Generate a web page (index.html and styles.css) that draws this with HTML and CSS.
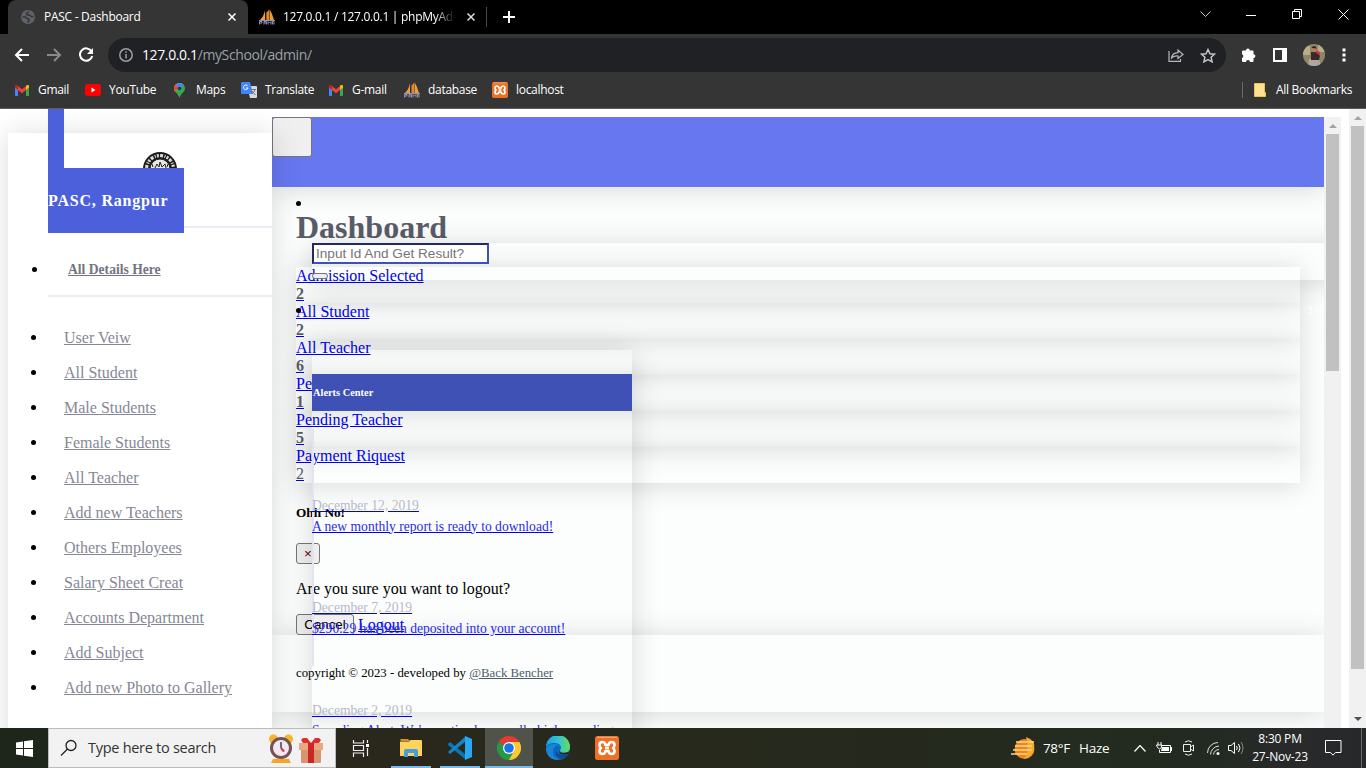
FILE: index.html
```html
<!DOCTYPE html>
<html lang="en">
<head>
<meta charset="utf-8">
<title>PASC - Dashboard</title>
<link rel="stylesheet" href="styles.css">
</head>
<body>
<svg class="defs" aria-hidden="true">
  <symbol id="gmail" viewBox="0 0 14 11"><path fill="#4285f4" d="M0 1v9.200q0 .8.8.8H3V4z"/><path fill="#34a853" d="M11 4v7h2.200q.8 0 .8-.8V1z"/><path fill="#ea4335" d="M1.500 0 7 4.300 12.500 0v4L7 8.300 1.500 4z"/><path fill="#c5221f" d="M0 1.500C0 0 1.500-.4 3 .8v4L0 2.800z"/><path fill="#fbbc04" d="M14 1.500C14 0 12.500-.4 11 .8v4l3-2z"/></symbol>
  <symbol id="sail" viewBox="0 0 16 16"><path fill="#f39a35" d="M6 1v10H1Q5 7 6 1zM10.500 0q3 5 4.500 11h-4.500z"/><path fill="#d98a35" d="M7 11V4l3-3v10z"/><path d="M7 11V4" stroke="#333"/><path d="M.5 15.500v-3H3v1.500H1m4 1.500v-3h2.500v3M5 14h2.500m1.500 1.500v-3l1.500 1.500 1.500-1.500v3m1.500 0v-3H15v3M0 11.500h16" fill="none" stroke="#8f90b5"/></symbol>
  <symbol id="xampp" viewBox="0 0 24 24"><rect width="24" height="24" rx="2.500" fill="#ee7024"/><path d="M2 1.300h20" stroke="#f6b48a"/><path d="M7.500 6Q4.500 6 4.500 9q0 2 1.500 3-1.500 1-1.500 3 0 3 3 3Q10 18 10.500 15h3q.5 3 3 3 3 0 3-3 0-2-1.500-3 1.500-1 1.500-3 0-3-3-3-2.500 0-3 3h-3Q10 6 7.500 6zM10 12h4" fill="none" stroke="#fff" stroke-width="2.600" stroke-linejoin="round"/></symbol>
</svg>
<header class="tabs">
  <div class="tab active">
    <svg width="14" height="14" viewBox="0 0 14 14"><circle cx="7" cy="7" r="7" fill="#5f6368"/><path d="M1.500 7h3l1.500 1.500 2 .5v1.500L6.500 12.500M8 1.500 5.500 3.500 6 5h2.500L10 6.500h2.500" fill="none" stroke="#35363a" stroke-width="1.500"/></svg>
    <span class="tab-title">PASC - Dashboard</span>
    <svg class="x" width="8" height="8" viewBox="0 0 8 8"><path d="m.5.5 7 7m0-7-7 7" stroke="#fff" stroke-width="1.500"/></svg>
  </div>
  <div class="tab second">
    <svg width="17" height="16"><use href="#sail" width="16" height="16"/></svg>
    <span class="tab-title fade">127.0.0.1 / 127.0.0.1 | phpMyAdmin</span>
    <svg class="x" width="8" height="8" viewBox="0 0 8 8"><path d="m.5.5 7 7m0-7-7 7" stroke="#ddd" stroke-width="1.500"/></svg>
  </div>
  <span class="tab-sep"></span>
  <svg class="plus" width="12" height="12"><path d="M6 0v12M0 6h12" stroke="#fff" stroke-width="2"/></svg>
  <div class="winctl">
    <svg width="11" height="7"><path d="m.5.5 5 5 5-5" fill="none" stroke="#ccc"/></svg>
    <svg width="11" height="11"><path d="M0 6.500h10" stroke="#fff"/></svg>
    <svg width="11" height="11"><path d="M.5 2.500h7v7h-7zM2.500 2V.5h7v7H8" fill="none" stroke="#fff"/></svg>
    <svg width="11" height="11"><path d="m.5.5 10 10m0-10-10 10" stroke="#fff"/></svg>
  </div>
</header>
<div class="toolbar">
  <svg class="nav-ico" width="16" height="14" viewBox="0 0 16 14"><path d="M15 7H2m6-6L2 7l6 6" fill="none" stroke="#fff" stroke-width="2"/></svg>
  <svg class="nav-ico" width="16" height="14" viewBox="0 0 16 14"><path d="M1 7h13M8 1l6 6-6 6" fill="none" stroke="#8a8a8a" stroke-width="2"/></svg>
  <svg class="nav-ico" width="16" height="16" viewBox="0 0 16 16"><path d="M13.600 4.600A6.200 6.200 0 1 0 14.200 9" fill="none" stroke="#fff" stroke-width="2"/><path d="M15 1v6H9z" fill="#fff"/></svg>
  <div class="omnibox">
    <svg width="14" height="14"><circle cx="7" cy="7" r="6.200" fill="none" stroke="#9aa0a6" stroke-width="1.500"/><path d="M7 6v4.500M7 3.300v1.500" stroke="#9aa0a6" stroke-width="1.500"/></svg>
    <span class="url"><b>127.0.0.1</b>/mySchool/admin/</span>
    <svg class="share" width="16" height="14" viewBox="0 0 16 14"><path d="M1 3v10.300h11.500V11M3.500 10q.5-5 6.500-5.300V2l5 4.500-5 4V8Q6 7.500 3.500 10z" fill="none" stroke="#b5b7ba" stroke-width="1.200"/></svg>
    <svg width="16" height="15" viewBox="0 0 16 15"><path d="m8 1.500 2 4.200 4.500.5-3.400 3.100 1 4.500L8 11.500l-4.100 2.300 1-4.500L1.500 6.200l4.500-.5z" fill="none" stroke="#c3c5c8" stroke-width="1.500"/></svg>
  </div>
  <div class="tools">
    <svg width="15" height="15" viewBox="0 0 15 15"><path d="M1 3.500q0-1 1-1h3a1.900 1.900 0 0 1 3.800 0h2.700q1 0 1 1v2.700a1.900 1.900 0 0 1 0 3.800v3q0 1-1 1H9a2 2 0 0 0-4 0H2q-1 0-1-1v-3a2 2 0 0 0 0-3.800z" fill="#fff"/></svg>
    <svg width="14" height="14"><path d="M1 1h12v12H1z" fill="none" stroke="#fff" stroke-width="2"/><path d="M9 0h5v14H9z" fill="#fff"/></svg>
    <svg width="22" height="22" viewBox="0 0 22 22"><defs><clipPath id="face"><circle cx="11" cy="11" r="11"/></clipPath></defs><g clip-path="url(#face)"><path fill="#8d8863" d="M0 0h22v22H0z"/><path fill="#b8ad89" d="M0 2h7v9H0zM15 1h7v7h-7z"/><path fill="#b3a4a0" d="M6 15h10l2 7H5z"/><path fill="#382a2c" d="M8 8h6l3 4-1 4H8z"/><path fill="#d8343c" d="m13 6 4 2v3l-4-2z"/><circle cx="11" cy="5.500" r="2.700" fill="#b67e66"/><path d="M8.500 4Q11 0 14 4.500" fill="#2c2426"/></g></svg>
    <svg width="4" height="14"><path d="M.5.5h3v3h-3zm0 5h3v3h-3zm0 5h3v3h-3z" fill="#fff"/></svg>
  </div>
</div>
<nav class="bookmarks">
  <span class="bm b1"><svg width="14" height="11"><use href="#gmail"/></svg>Gmail</span>
  <span class="bm b2"><svg width="16" height="12"><rect width="16" height="12" rx="3" fill="#f00"/><path d="m6.500 3.500 4 2.500-4 2.500z" fill="#fff"/></svg>YouTube</span>
  <span class="bm b3"><svg width="11" height="15" viewBox="0 0 11 15"><path d="M5.500 0A5.500 5.500 0 0 0 0 5.500C0 9 4 10 5.500 15 7 10 11 9 11 5.500A5.500 5.500 0 0 0 5.500 0z" fill="#34a853"/><path d="M1 8.500 9.500 2Q8 0 5.500 0A5.500 5.500 0 0 0 0 5.500Q0 7 1 8.500z" fill="#fbbc04"/><path d="M0 5.500Q0 3.500 1.300 2L5 5 1 8.500Q0 7 0 5.500z" fill="#ea4335"/><path d="M1.300 2Q3 0 5.500 0 8 0 9.700 2L5.500 6z" fill="#4285f4"/><circle cx="5.500" cy="5.500" r="1.800" fill="#35363a"/></svg>Maps</span>
  <span class="bm b4"><svg width="16" height="16"><path d="M6 4h9q1 0 1 1v10q0 1-1 1H9z" fill="#d5d8dc"/><path d="M1 0h8l3 12H1q-1 0-1-1V1q0-1 1-1z" fill="#4285f4"/><path d="M6.800 4.200A2.300 2.300 0 1 0 7 6H5" fill="none" stroke="#fff"/><path d="M10.500 7.500H15m-1 0q-1 3-3 4.500m0-3 3.500 4" fill="none" stroke="#777"/></svg>Translate</span>
  <span class="bm b5"><svg width="14" height="11"><use href="#gmail"/></svg>G-mail</span>
  <span class="bm b6"><svg width="16" height="16"><use href="#sail"/></svg>database</span>
  <span class="bm b7"><svg width="16" height="16"><use href="#xampp"/></svg>localhost</span>
  <span class="bm all"><svg width="12" height="14"><path d="M.5.5h10v9h1v4H.5z" fill="#fde293" stroke="#e9c54a"/></svg>All Bookmarks</span>
</nav>

<main class="viewport">
  <aside class="sidebar">
    <div class="brand-area">
      <svg class="seal" width="36" height="36" viewBox="0 0 36 36"><circle cx="18" cy="18" r="17" fill="#1e1c19"/><circle cx="18" cy="18" r="13.500" fill="none" stroke="#ddd" stroke-width="3.200" stroke-dasharray="2 1.300 3 1.500 1 1.200"/><circle cx="18" cy="18" r="10" fill="#e8e8e6" stroke="#222"/><path d="m13 17 2-4 2 3 1-5 2 5 3-3 1 4M11 16l-1-3m15 3 1-3" stroke="#222" fill="none"/></svg>
      <div class="brand-stem"></div>
      <div class="brand">PASC, Rangpur</div>
      <div class="rule rule-a"></div>
    </div>
    <ul class="menu">
      <li class="first"><a>All Details Here</a></li>
      <li class="rule"></li>
      <li><a>User Veiw</a></li><li><a>All Student</a></li><li><a>Male Students</a></li><li><a>Female Students</a></li><li><a>All Teacher</a></li><li><a>Add new Teachers</a></li><li><a>Others Employees</a></li><li><a>Salary Sheet Creat</a></li><li><a>Accounts Department</a></li><li><a>Add Subject</a></li><li><a>Add new Photo to Gallery</a></li>
    </ul>
  </aside>
  <section class="content">
    <div class="topbar"><button class="toggle" aria-label="Menu"></button></div>
    <div class="page">
      <h1>Dashboard</h1>
      <div class="cards">
        <a class="card">Admission Selected<b>2</b></a>
        <a class="card">All Student<b>2</b></a>
        <a class="card">All Teacher<b>6</b></a>
        <a class="card">Pending Student<b>1</b></a>
        <a class="card">Pending Teacher<b>5</b></a>
        <a class="card">Payment Riquest<b class="thin">2</b></a>
      </div>
      <h5>Ohh No!</h5>
      <button class="close">×</button>
      <p>Are you sure you want to logout?</p>
      <div class="actions"><button class="cancel">Cancel</button><a>Logout</a></div>
    </div>
    <footer>copyright © 2023 - developed by <a>@Back Bencher</a></footer>
    <div class="after"></div>
    <i class="dot d1"></i><i class="dot d2"></i>
    <div class="search"><input placeholder="Input Id And Get Result?" aria-label="Search"><button aria-label="Go"></button></div>
    <span class="badge">3+</span>
    <div class="alerts">
      <h6>Alerts Center</h6>
      <div class="items">
        <a><span>December 12, 2019</span>A new monthly report is ready to download!</a>
        <a><span>December 7, 2019</span>$290.29 has been deposited into your account!</a>
        <a><span>December 2, 2019</span>Spending Alert: We've noticed unusually high spending</a>
      </div>
    </div>
  </section>
  <div class="scroll inner"><i class="up"></i><i class="thumb"></i></div>
  <div class="scroll outer"><i class="up"></i><i class="thumb"></i><i class="down"></i></div>
</main>

<footer class="taskbar">
  <div class="start"><svg width="17" height="17" viewBox="0 0 17 17"><path d="m0 2.500 7-1V8H0zM8 1.300 17 0v8H8zM0 9h7v6.500l-7-1zm8 0h9v8l-9-1.300z" fill="#fff"/></svg></div>
  <div class="find">
    <svg width="18" height="18"><circle cx="11" cy="6.500" r="5" fill="none" stroke="#222" stroke-width="1.300"/><path d="M7.500 10 1 16.500" stroke="#222" stroke-width="1.300"/></svg>
    <span>Type here to search</span>
    <svg class="clock" width="24" height="29" viewBox="0 0 24 29"><path d="m4 25 16 0 2 4H2z" fill="#f5a623"/><circle cx="4.500" cy="5" r="4.500" fill="#f7b52c"/><circle cx="19.500" cy="5" r="4.500" fill="#f7b52c"/><circle cx="12" cy="14" r="9.500" fill="#eee9f5" stroke="#755154" stroke-width="3"/><path d="M12 8v6" stroke="#473b56" stroke-width="1.500"/><path d="m12 14 3 3.500" stroke="#e22c46" stroke-width="2"/></svg>
    <svg class="gift" width="24" height="26" viewBox="0 0 24 26"><path d="M2 12h20v13q0 1-1 1H3q-1 0-1-1z" fill="#d99470"/><path d="M0 6h24v7H0z" fill="#e8a883"/><path d="M9 6h6v20H9z" fill="#c92725"/><path d="M12 6 8 1H4L2 3l2 3zm0 0 4-5h4l2 2-2 3z" fill="#d93030"/></svg>
  </div>
  <div class="app a0"><svg width="17" height="17"><path d="M1.500 0v3h10V0M1.500 17v-4h10v4M1.500 5.500h10v5h-10zM15.500 0v3m0 5v8" fill="none" stroke="#eee" stroke-width="1.200"/><path d="M14 4h3v3h-3z" fill="#fff"/></svg></div>
  <div class="app line"><svg width="22" height="18" viewBox="0 0 22 18"><path d="M0 0h8l2 2H1z" fill="#d9930d"/><path d="M0 2.500h9L10.500 1H21q1 0 1 1v15H0z" fill="#ffd35d"/><path d="M4 18v-6q0-2 2-2h10q2 0 2 2v6h-4v-4H8v4z" fill="#43a0dc"/></svg></div>
  <div class="app line"><svg width="24" height="24" viewBox="0 0 24 24"><path d="m0 8 2-2 16 13v5L0 9z" fill="#0877b9"/><path d="M0 16 18 0v5L2 18z" fill="#1187c9"/><path d="m17 0 7 3v18l-7 3z" fill="#29a8f2"/></svg></div>
  <div class="app line on"><svg width="24" height="24" viewBox="0 0 24 24"><path d="M12 12 1.600 6A12 12 0 0 1 22.400 6z" fill="#e33b2e"/><path d="M12 12 22.400 6A12 12 0 0 1 12 24z" fill="#fcc934"/><path d="M12 24A12 12 0 0 1 1.600 6L12 12l5 3z" fill="#279847"/><path d="M12 6h10.400L17 15z" fill="#fcc934"/><circle cx="12" cy="12" r="6" fill="#fff"/><circle cx="12" cy="12" r="4.800" fill="#1a73e8"/></svg></div>
  <div class="app"><svg width="24" height="24" viewBox="0 0 24 24"><defs><linearGradient id="eg"><stop stop-color="#199fe8"/><stop offset=".55" stop-color="#35c5cf"/><stop offset="1" stop-color="#65df56"/></linearGradient></defs><circle cx="12" cy="12" r="12" fill="#0c68bd"/><path d="M0 11A12 12 0 0 1 24 11q0 5-5 6-6 0-5-3 1-1 1-2 0-5-7-5-6 0-8 4z" fill="url(#eg)"/><path d="M8 12q-4 7 5 12-12 0-13-11Q2 8 8 8q5 0 7 3-5-3-7 1z" fill="#1786d8"/><path d="M10 13q0 6 7 6 3 0 6-2-2 5-8 6-7-3-5-10z" fill="#134a91"/><path d="M14 14.500q0 4 10 1v1l-3 2h-5q-4-1-2-4z" fill="#272a20"/></svg></div>
  <div class="app"><svg width="24" height="24"><use href="#xampp"/></svg></div>
  <div class="tray">
    <svg class="haze" width="25" height="22" viewBox="0 0 25 22"><circle cx="13.500" cy="12" r="10" fill="#ee8420"/><path d="M15 0q10 3 8 12-2 9-10 10 6-7 2-22z" fill="#f7aa32"/><path d="M5 5h18M4 9h17M2 13h19M0 17h16" stroke="#ffd984" stroke-width="1.700"/></svg>
    <span class="temp">78°F</span><span class="haze-text">Haze</span>
    <svg class="t1" width="12" height="7"><path d="m.5 6.500 5.500-6 5.500 6" fill="none" stroke="#fff" stroke-width="1.200"/></svg>
    <svg class="t2" width="16" height="12"><path d="M5 3.500h9.500v7H3.500V8M2 0v3m3-3v3M.5 3h5v2.500l-2 1.500-2-1.500zM15.500 5v4" fill="none" stroke="#fff"/><path d="M6 5h7v4H5z" fill="#fff"/></svg>
    <svg class="t3" width="11" height="16"><path d="M.5 4.500h7v7h-7zM7.500 7 10.500 5v6l-3-2M2 2q3.500-2.500 7 0M2 14q3.500 2.500 7 0" fill="none" stroke="#eee"/></svg>
    <svg class="t4" width="13" height="13"><path d="M.5 11A10.500 10.500 0 0 1 11 .5M3.500 12.500A9 9 0 0 1 12 4M6.500 12.500A6 6 0 0 1 12 7.500" fill="none" stroke="#ddd"/><circle cx="11" cy="11.500" r="1.500" fill="#fff"/></svg>
    <svg class="t5" width="17" height="14"><path d="M.5 4.500H3l3.500-3v11l-3.500-3H.500zM8.500 5q1.500 2 0 4m2-6q3 4 0 8" fill="none" stroke="#fff"/><path d="M13 1q4 6 0 12" fill="none" stroke="#888"/></svg>
    <span class="time">8:30 PM<br>27-Nov-23</span>
    <svg class="t6" width="17" height="16"><path d="M.5.500h15.500v12H10.500L8 15.200 5.500 12.500H.5z" fill="none" stroke="#fff"/></svg>
    <span class="peek"></span>
  </div>
</footer>
</body>
</html>
```
FILE: styles.css
```css
* { box-sizing: border-box; }
body { margin: 0; width: 1366px; height: 768px; overflow: hidden; background: #fff; font-family: "Liberation Serif", serif; font-size: 16px; line-height: 18px; display: flex; flex-direction: column; }
svg { display: block; flex: none; }
.defs { position: absolute; width: 0; height: 0; }
.tabs, .toolbar, .bookmarks, .taskbar { font-family: "Open Sans", "Noto Sans", sans-serif; color: #fff; display: flex; align-items: center; flex: none; }

.tabs { height: 34px; background: #000; font-size: 12px; letter-spacing: -.28px; }
.tab { display: flex; align-items: center; height: 34px; }
.tab.active { width: 240px; margin-left: 8px; padding-left: 13px; background: #353535; border-radius: 8px 8px 0 0; }
.tab-title { width: 180px; margin-left: 9px; white-space: nowrap; overflow: hidden; }
.tab .x { margin-left: 4px; }
.tab.second { padding-left: 11px; width: 238px; }
.tab.second .tab-title { width: 172px; margin-left: 7px; }
.tab.second .x { margin-left: 12px; }
.fade { -webkit-mask-image: linear-gradient(90deg, #000 88%, transparent); mask-image: linear-gradient(90deg, #000 88%, transparent); }
.tab-sep { width: 1px; height: 20px; background: #4a4a4a; }
.plus { margin-left: 16px; }
.winctl { display: flex; align-items: center; gap: 35px; margin: -6px 17px 0 auto; }

.toolbar { height: 42px; background: #353535; padding-left: 14px; }
.nav-ico { margin-right: 16px; }
.omnibox { display: flex; align-items: center; width: 1118px; height: 34px; margin-left: -2px; padding: 0 10px 0 11px; border-radius: 17px; background: #202124; }
.url { margin-left: 9px; font-size: 14px; letter-spacing: -.38px; color: #9aa0a6; }
.url b { font-weight: 400; color: #fff; }
.share { margin-left: auto; margin-right: 16px; }
.tools { display: flex; align-items: center; flex: 1; justify-content: space-between; padding: 0 20px 0 15px; }

.bookmarks { height: 33px; background: #353535; border-bottom: 1px solid #5d5b5b; font-size: 12px; letter-spacing: -.3px; padding: 0 0 4px 15px; }
.bm { display: flex; align-items: center; gap: 9px; white-space: nowrap; }
.b1 { width: 70px; } .b2 { width: 89px; gap: 8px; } .b3 { width: 67px; gap: 11px; } .b4 { width: 88px; gap: 8px; } .b5 { width: 75px; } .b6 { width: 88px; gap: 8px; } .b7 { gap: 8px; }
.bm.all { margin-left: auto; width: 124px; height: 16px; border-left: 1px solid #6b6b6b; padding-left: 11px; gap: 10px; }

.viewport { display: flex; height: 619px; position: relative; overflow: hidden; flex: none; }
.sidebar { width: 264px; margin: 24px 0 0 8px; box-shadow: 0 2px 28px rgba(0, 0, 0, .15); z-index: 2; height: 760px; flex: none; }
.brand-area { height: 94px; position: relative; }
.seal { position: absolute; left: 134px; top: 18px; }
.brand-stem { position: absolute; left: 40px; top: -24px; width: 16px; height: 60px; background: #4b60da; }
.brand { position: absolute; left: 40px; top: 35px; width: 136px; height: 65px; line-height: 65px; background: #4b60da; color: #fff; font-weight: 700; letter-spacing: .8px; z-index: 1; }
.rule { height: 2px; background: #eaecf4; }
.rule-a { position: absolute; left: 40px; right: 0; top: 93px; }
.menu { margin: 0; padding: 0 0 0 40px; list-style: none; color: #858796; }
.menu a { text-decoration: underline; color: #858796; }
.menu li:not(.rule) { height: 35px; line-height: 35px; padding-left: 16px; display: flex; align-items: center; }
.menu li:not(.rule)::before { content: ""; width: 5px; height: 5px; border-radius: 50%; background: #000; margin: 0 28px 0 -33px; }
.menu li.first:not(.rule) { height: 68px; padding: 16px 0 0 20px; font-size: 13.6px; font-weight: 700; }
.menu li.first:not(.rule)::before { margin: 0 31px 0 -36px; }
.menu li.first a { color: #737482; }
.menu .rule { margin-bottom: 23px; }

.content { width: 1052px; height: 611px; margin-top: 8px; background: #fbfefd; position: relative; overflow: hidden; flex: none; }
.topbar { height: 70px; background: #6777ef; box-shadow: 0 2px 28px rgba(0, 0, 0, .15); }
button { display: block; background: #efefef; border: 1px solid #767676; border-radius: 3px; padding: 0; font: 13.333px "Liberation Sans", sans-serif; color: #000; }
.toggle { width: 40px; height: 40px; }
.page { padding: 0 24px; }
h1 { margin: 0; padding-top: 22px; height: 80px; font-size: 32px; line-height: 36px; color: #5a5c69; }
.card { display: block; height: 36px; text-decoration: underline; color: #0000ee; box-shadow: 0 2px 28px rgba(0, 0, 0, .15); }
.card b { display: block; width: max-content; color: #5a5c69; text-decoration: underline #0000ee; }
.card b.thin { font-weight: 400; }
h5 { margin: 22px 0; font-size: 13.28px; line-height: 16px; }
.close { width: 24px; height: 21px; color: #600; }
p { margin: 16px 0; }
.actions { display: flex; gap: 4px; align-items: center; height: 21px; }
.actions a { color: #0000ee; text-decoration: underline; }
.cancel { width: 58px; height: 21px; }
footer { font-size: 12.8px; }
.content footer { height: 77px; padding: 30px 24px 0; line-height: 16px; box-shadow: 0 2px 28px rgba(0, 0, 0, .15); }
.content footer a { color: #4e5d68; text-decoration: underline; }
.dot { position: absolute; left: 24px; width: 5px; height: 5px; border-radius: 50%; background: #000; }
.d1 { top: 84px; } .d2 { top: 191px; }
.search { position: absolute; left: 40px; top: 126px; width: 1040px; height: 37px; box-shadow: 0 2px 28px rgba(0, 0, 0, .15); }
.search input { display: block; width: 177px; height: 21px; border: 2px solid; border-color: #222b60 #3f51b5 #3f51b5 #222b60; padding: 0 2px 1px; font: 13.6px "Liberation Sans", sans-serif; background: #fff; }
.search input::placeholder { color: #757575; }
.search button { width: 16px; height: 6px; margin-top: 9px; }
.badge { position: absolute; left: 1035px; top: 184px; color: #fff; font-size: 12px; }
.alerts { position: absolute; left: 40px; top: 233px; width: 320px; height: 500px; padding-top: 24px; box-shadow: 0 2px 28px rgba(0, 0, 0, .15); }
h6 { margin: 0; height: 37px; line-height: 37px; background: #3f51b5; color: #fff; padding-left: 1px; font-size: 10.4px; }
.items { margin-top: 18px; padding-top: 67px; position: relative; }
.items::before { content: ""; position: absolute; left: 0; top: 0; width: 2px; height: 237px; background: #e3e3f2; }
.items a { position: relative; display: block; height: 102.400px; font-size: 13.6px; line-height: 20px; color: #2a2aee; text-decoration: underline #0000ee; white-space: nowrap; }
.items span { display: block; width: max-content; color: #b7b9cc; text-decoration: underline #0000ee; height: 20.500px; }

.scroll { position: relative; width: 17px; background: #f1f1f1; flex: none; }
.inner { margin: 8px 8px 0 0; }
.scroll i { position: absolute; }
.thumb { left: 2px; width: 13px; top: 17px; background: #c1c1c1; }
.inner .thumb { height: 237px; } .outer .thumb { height: 543px; }
.up { left: 5px; top: 7px; border: 4px solid transparent; border-top: 0; border-bottom-color: #a3a3a3; }
.down { left: 5px; bottom: 7px; border: 4px solid transparent; border-bottom: 0; border-top-color: #505050; }

.taskbar { height: 40px; background: linear-gradient(90deg, #1e251b 0, #1e251b 48px, #2a271c 340px, #28291d 620px, #25291d 900px, #242b20 1080px, #222a21 1200px, #292a2b 1300px, #262829 1366px); font-size: 14px; }
.start { width: 48px; display: flex; justify-content: center; }
.find { width: 288px; height: 40px; background: #f2f2f2; border: 1px solid #bbb; color: #333; display: flex; align-items: center; padding-left: 11px; font-size: 14.5px; letter-spacing: -.28px; }
.find span { width: 181px; margin-left: 10px; white-space: nowrap; }
.gift { margin: 4px 0 0 6px; }
.app { width: 48px; height: 40px; margin-right: 1px; display: flex; align-items: center; justify-content: center; }
.app.a0 { margin-right: 3px; }
.app.line { background: linear-gradient(#76b9ed, #76b9ed) 50% 100% / 40px 2px no-repeat; }
.app.on { background: linear-gradient(#76b9ed, #76b9ed) 0 100% / 48px 2px no-repeat, #50534a; }
.tray { margin-left: auto; width: 355px; display: flex; align-items: center; height: 40px; }
.temp { width: 36px; margin-left: 7px; font-size: 13.5px; letter-spacing: -.35px; }
.haze-text { width: 45px; font-size: 13.5px; letter-spacing: -.25px; }
.t1 { margin-left: 10px; } .t2 { margin-left: 10px; } .t3 { margin-left: 11px; } .t4 { margin-left: 13px; } .t5 { margin-left: 8px; }
.time { width: 66px; margin-left: 2px; text-align: center; font-size: 12px; line-height: 18px; letter-spacing: -.2px; white-space: nowrap; }
.t6 { margin-left: 12px; }
.peek { width: 1px; height: 40px; margin: 0 4px 0 auto; background: #686a6a; }
```
